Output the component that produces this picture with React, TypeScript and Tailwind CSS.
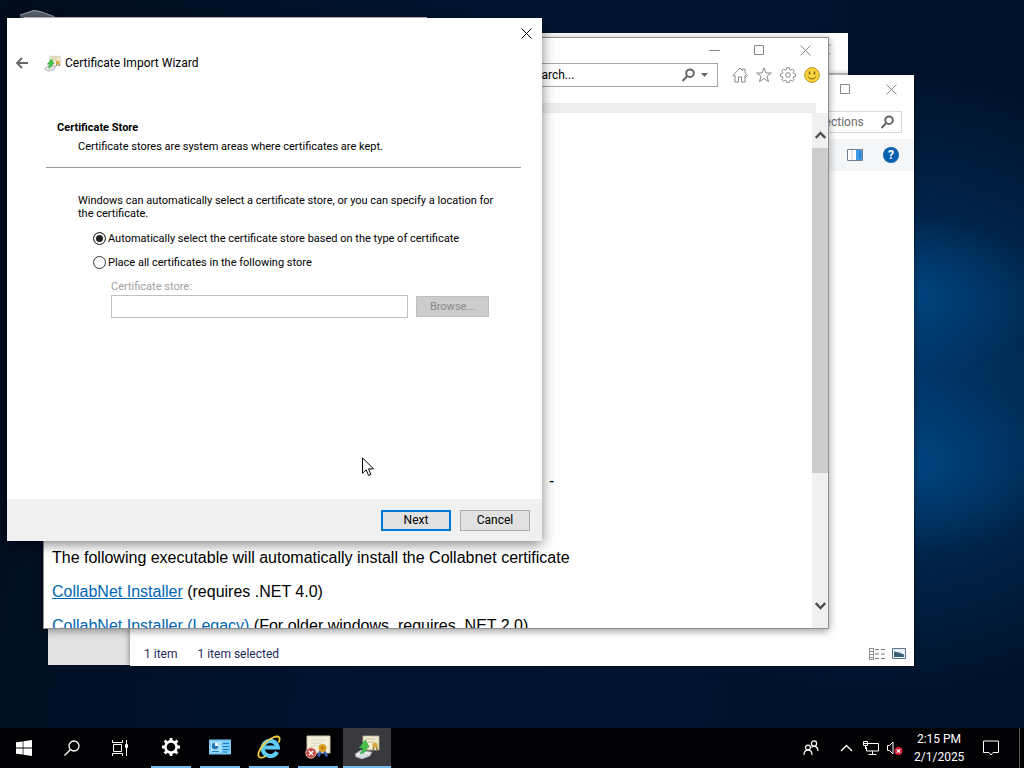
import { useState, type ReactNode } from 'react';

function CloseIcon() {
  return (
    <svg viewBox="0 0 11 11" className="size-[11px]" fill="none" stroke="currentColor">
      <path d="M.5 .5l10 10M10.5 .5l-10 10" />
    </svg>
  );
}

function MaximizeIcon() {
  return (
    <svg viewBox="0 0 11 11" className="size-[11px]" fill="none" stroke="currentColor">
      <path d="M.5 .5h9v9h-9z" />
    </svg>
  );
}

function MinimizeIcon() {
  return (
    <svg viewBox="0 0 11 11" className="size-[11px]" fill="none" stroke="currentColor">
      <path d="M0 5.5h11" />
    </svg>
  );
}

function MagnifierIcon() {
  return (
    <svg viewBox="0 0 14 14" className="size-[14px]" fill="none" stroke="#666" strokeWidth="2">
      <circle cx="9" cy="5.2" r="3.8" />
      <path d="M6.3 8L1.5 13" />
    </svg>
  );
}

function WindowControls() {
  return (
    <div className="flex h-full text-[#888]">
      <button type="button" aria-label="Minimize" className="grid w-[45px] place-items-center">
        <MinimizeIcon />
      </button>
      <button type="button" aria-label="Maximize" className="grid w-[45px] place-items-center">
        <MaximizeIcon />
      </button>
      <button type="button" aria-label="Close" className="grid w-[46px] place-items-center">
        <CloseIcon />
      </button>
    </div>
  );
}

function WizardIcon({ className }: { className: string }) {
  return (
    <svg viewBox="0 0 26 26" className={className}>
      <path d="M9 2h16v14H9z" fill="#f1ecd0" stroke="#b9b394" strokeWidth=".8" />
      <path d="M11.5 5h10M14 8h6" stroke="#c5bd99" />
      <path d="M19.8 12l-.6 4.500M22.500 12l.8 4.500" stroke="#8a7a3a" strokeWidth="1.600" />
      <circle cx="21" cy="11" r="2.600" fill="#d9a63a" />
      <path d="M1 20l6-4 11 2-2 4-8 3-6-2z" fill="#d7dade" stroke="#9399a0" strokeWidth=".7" />
      <path d="M3 21l7-2.500 5 1" fill="none" stroke="#fff" />
      <path d="M6 19.500c2-1.500 2.500-3 2.300-5.500H5l6.500-8 3.500 7-2 .3c.3 3.200-2.500 6.200-7 6.200z" fill="#46c24a" stroke="#1f8d2c" strokeWidth=".6" />
    </svg>
  );
}

function CertificateErrorIcon() {
  return (
    <svg viewBox="0 0 26 26" className="size-[26px]">
      <path d="M2 2h23v17H2z" fill="#f3efdc" stroke="#c9c2a2" />
      <path d="M6 6h14M6 9h12M6 12h7" stroke="#ddd8c0" />
      <path d="M15.500 17l-2 5.500M19 17l3 5.500" stroke="#3d62b4" strokeWidth="2.600" />
      <circle cx="17.500" cy="14" r="4" fill="#dda32b" />
      <circle cx="17.500" cy="14" r="1.800" fill="#b97a15" />
      <circle cx="6" cy="19" r="5.200" fill="#c8403a" stroke="#e6b4ae" />
      <path d="M3.700 16.700l4.600 4.600M8.300 16.700l-4.600 4.600" stroke="#fff" strokeWidth="1.600" />
    </svg>
  );
}

function ExplorerE() {
  return (
    <svg viewBox="0 0 24 24" className="size-6" fill="none">
      <path d="M20 17a7.600 7.600 0 1 1 .8-4.500H8" stroke="#5fccf5" strokeWidth="4.200" />
      <path
        d="M3 22.500C-.5 21 2 14 7.500 8.500S20 .2 22 2.200c1.200 1.200.6 3.300-.4 5.300"
        stroke="#f2cf3f"
        strokeWidth="1.800"
      />
      <path d="M3 22.500c2 .7 4-.3 6-1.700" stroke="#f2cf3f" strokeWidth="1.500" />
    </svg>
  );
}

function PanelIcon() {
  return (
    <svg viewBox="0 0 22 16" className="h-4 w-[22px]">
      <path d="M0 .5h22v15H0z" fill="#76c9f5" />
      <path d="M1.500 2.500h11v11h-11z" fill="#a7e0fb" />
      <circle cx="6" cy="7" r="3.200" fill="#2277b5" />
      <path d="M6 7V3.500A3.500 3.500 0 0 1 9.500 7z" fill="#f5fbff" />
      <path d="M3 12.500h7M14 4.500h6M14 7.500h6M14 10.500h6M14 13h4" stroke="#1c7cc4" />
    </svg>
  );
}

function GearIcon() {
  return (
    <svg viewBox="0 0 20 20" className="size-5" fill="none" stroke="#fff">
      <circle cx="10" cy="10" r="5.600" strokeWidth="2.600" />
      <path
        d="M10 1v3M10 16v3M1 10h3M16 10h3M3.600 3.600l2.200 2.200M14.200 14.200l2.200 2.200M3.600 16.400l2.200-2.200M14.200 5.800l2.200-2.200"
        strokeWidth="2.800"
      />
    </svg>
  );
}

function BackgroundWindows() {
  return (
    <>
      <svg viewBox="0 0 40 14" className="absolute left-[18px] top-[10px] h-[14px] w-10">
        <path d="M2 5L16 0l6 1 16 6v7H3z" fill="#59636e" />
        <path d="M2 5L16 .5l6 1 14 5" fill="none" stroke="#9ba3ab" />
      </svg>
      <div className="absolute left-6 top-[17px] h-[480px] w-[403px] border-t border-[#cfc3cf] bg-white" />
      <section className="absolute left-12 top-[33px] flex h-[632px] w-[800px] flex-col bg-white">
        <header className="flex h-8 justify-end">
          <WindowControls />
        </header>
        <div className="mt-2 flex-1 border-t border-[#ccc] bg-[#e3e3e3]" />
      </section>
    </>
  );
}

function ConnectionsWindow() {
  return (
    <section className="absolute left-[130px] top-[75px] flex h-[591px] w-[784px] flex-col bg-white text-xs shadow-[0_0_6px_rgba(0,0,0,0.5)]">
      <header className="flex h-7 justify-end">
        <WindowControls />
      </header>
      <div className="flex justify-end pb-1.5 pr-3 pt-2">
        <label className="flex h-[22px] w-[206px] items-center border border-[#d9d9d9] pr-[7px]">
          <input
            type="text"
            aria-label="Search Network Connections"
            placeholder="Search Network Connections"
            className="min-w-0 flex-1 pl-3 outline-none placeholder:text-[#6d6d6d]"
          />
          <MagnifierIcon />
        </label>
      </div>
      <div className="flex h-8 items-center justify-end gap-5 bg-[#f5f6f7] pr-[15px]">
        <button type="button" aria-label="Preview pane">
          <svg viewBox="0 0 16 12" className="h-3 w-4">
            <path d="M.5 .5h15v11H.5z" fill="#fff" stroke="#6f7f8f" />
            <path d="M9 1h6v10H9z" fill="#3d9be9" />
            <path d="M5 1v10" stroke="#c8cdd2" />
            <path d="M13 2v8" stroke="#1c6fc0" />
          </svg>
        </button>
        <button
          type="button"
          aria-label="Help"
          className="grid size-4 place-items-center rounded-full bg-[#0a63b1] font-bold text-white"
        >
          ?
        </button>
      </div>
      <div className="flex-1" />
      <footer className="flex h-6 items-center gap-5 px-[14px] text-[#1e2a5a]">
        <span>1 item</span>
        <span>1 item selected</span>
        <svg viewBox="0 0 40 14" className="-mr-2 ml-auto h-[14px] w-10">
          <path d="M1.500 1v12M5.500 1v12M1.500 1.500h4M1.500 4.500h4M1.500 7.500h4M1.500 10.500h4M1.500 12.500h4" fill="none" stroke="#777" strokeWidth=".8" />
          <path d="M7 2.500h4M7 7h4M7 11.500h4M13 2.500h4M13 7h4M13 11.500h4" stroke="#777" />
          <path d="M24.500 1.500h13v10h-13z" fill="#e9f2fa" stroke="#5c7489" />
          <path d="M26 4.500l5 1 5 2v2.500H26z" fill="#3e5f78" />
        </svg>
      </footer>
    </section>
  );
}

function BrowserWindow() {
  return (
    <section className="absolute left-[43px] top-[37px] flex h-[592px] w-[786px] flex-col border border-[#8f8f8f] bg-white shadow-[0_2px_8px_rgba(0,0,0,0.4)]">
      <header className="flex h-[25px] justify-end">
        <WindowControls />
      </header>
      <div className="flex items-center justify-end gap-2 pr-2 text-[#8a8a8a]">
        <label className="mr-1.5 flex h-6 w-[212px] items-center gap-1.5 border border-[#a5a5a5] pr-[9px] text-xs text-black">
          <input
            type="text"
            aria-label="Search"
            defaultValue="Search..."
            className="min-w-0 flex-1 pl-[21px] outline-none"
          />
          <MagnifierIcon />
          <svg viewBox="0 0 7 4" className="h-1 w-[7px]">
            <path d="M0 0h7L3.500 4z" fill="#666" />
          </svg>
        </label>
        <button type="button" aria-label="Home">
          <svg viewBox="0 0 16 16" className="size-4" fill="none" stroke="currentColor">
            <path d="M.8 8.500L8 1l2.500 2.600V2h2.500v4l2.300 2.500-1 1L13 8.300V15H9.500v-5h-3v5H3V8.300L1.800 9.500z" />
          </svg>
        </button>
        <button type="button" aria-label="Favorites">
          <svg viewBox="0 0 16 16" className="size-4" fill="none" stroke="currentColor">
            <path d="M8 .8l1.900 5.200h5.400l-4.300 3.300 1.600 5.500L8 11.500l-4.600 3.300L5 9.300.7 6h5.400z" />
          </svg>
        </button>
        <button type="button" aria-label="Tools">
          <svg viewBox="0 0 16 16" className="size-4" fill="none" stroke="currentColor">
            <circle cx="8" cy="8" r="2.400" />
            <path d="M6.800.7h2.400l.4 2 1.200.5 1.700-1.100 1.700 1.700-1.100 1.700.5 1.100 2 .4v2.400l-2 .4-.5 1.100 1.100 1.700-1.700 1.700-1.700-1.100-1.200.5-.4 2H6.800l-.4-2-1.200-.5-1.700 1.100-1.700-1.700 1.100-1.700-.5-1.100-2-.4V7l2-.4.5-1.100-1.100-1.700 1.700-1.700 1.700 1.100 1.200-.5z" />
          </svg>
        </button>
        <button type="button" aria-label="Feedback">
          <svg viewBox="0 0 16 16" className="size-4">
            <circle cx="8" cy="8" r="7.400" fill="#f8d33c" stroke="#bd981d" />
            <path d="M5.500 4.500v3M10.500 4.500v3" stroke="#77560f" strokeWidth="1.400" />
            <path d="M4 9.500c1.500 3.200 6.500 3.200 8 0" fill="none" stroke="#77560f" />
          </svg>
        </button>
      </div>
      <div className="mr-3 mt-4 h-[10px] bg-[#eee]" />
      <div className="flex min-h-0 flex-1">
        <article className="flex min-w-0 flex-1 flex-col gap-4 overflow-hidden px-2 pt-[359px] font-['Liberation_Sans',Arial,sans-serif] text-base leading-[18px] text-black">
          <p className="pl-[497px]">-</p>
          <p className="mt-[43px]">
            The following executable will automatically install the Collabnet certificate
          </p>
          <p>
            <a href="#installer" className="text-[#0066b3] underline">CollabNet Installer</a> (requires .NET 4.0)
          </p>
          <p className="whitespace-nowrap">
            <a href="#legacy" className="text-[#0066b3] underline">CollabNet Installer (Legacy)</a> (For older windows, requires .NET 2.0)
          </p>
        </article>
        <div className="flex w-4 flex-col bg-[#f0f0f0] text-[#505050]">
          <button type="button" aria-label="Scroll up" className="grid h-[35px] place-items-center pt-2">
            <svg viewBox="0 0 11 8" className="h-2 w-[11px]" fill="none" stroke="currentColor" strokeWidth="2.400">
              <path d="M.8 7l4.700-5 4.700 5" />
            </svg>
          </button>
          <div className="h-[325px] bg-[#cdcdcd]" />
          <button type="button" aria-label="Scroll down" className="mb-[14px] mt-auto grid h-4 place-items-center">
            <svg viewBox="0 0 11 8" className="h-2 w-[11px]" fill="none" stroke="currentColor" strokeWidth="2.400">
              <path d="M.8 1l4.700 5 4.700-5" />
            </svg>
          </button>
        </div>
      </div>
    </section>
  );
}

function ImportWizard() {
  const [mode, setMode] = useState<'auto' | 'manual'>('auto');
  const radioClass =
    'size-[13px] appearance-none rounded-full border border-[#333] bg-white checked:bg-[#222] checked:shadow-[inset_0_0_0_2px_white]';

  return (
    <section className="absolute left-[7px] top-[18px] flex h-[523px] w-[535px] flex-col bg-white text-[11px] leading-[13px] text-black shadow-[0_3px_12px_rgba(0,0,0,0.5)]">
      <header className="text-xs">
        <div className="flex h-[30px] justify-end">
          <button type="button" aria-label="Close" className="grid w-8 place-items-center">
            <CloseIcon />
          </button>
        </div>
        <div className="flex h-[30px] items-center px-2">
          <button type="button" aria-label="Back" className="text-[#666]">
            <svg viewBox="0 0 14 12" className="h-3 w-[14px]" fill="none" stroke="currentColor" strokeWidth="1.800">
              <path d="M13 6H2M7 1L2 6l5 5" />
            </svg>
          </button>
          <WizardIcon className="ml-[15px] mr-1 size-[17px]" />
          <h1>Certificate Import Wizard</h1>
        </div>
      </header>
      <div className="flex-1 pt-[43px]">
        <h2 className="pl-[50px] font-bold">Certificate Store</h2>
        <p className="pl-[71px] pt-1.5">Certificate stores are system areas where certificates are kept.</p>
        <hr className="mb-[26px] ml-[39px] mr-[21px] mt-[14px] border-[#999]" />
        <p className="w-[490px] pl-[71px]">
          Windows can automatically select a certificate store, or you can specify a location for
          the certificate.
        </p>
        <div className="flex flex-col gap-[11px] pl-[86px] pt-3">
          <label className="flex items-center gap-0.5">
            <input
              type="radio"
              name="store"
              checked={mode === 'auto'}
              onChange={() => setMode('auto')}
              className={radioClass}
            />
            Automatically select the certificate store based on the type of certificate
          </label>
          <label className="flex items-center gap-0.5">
            <input
              type="radio"
              name="store"
              checked={mode === 'manual'}
              onChange={() => setMode('manual')}
              className={radioClass}
            />
            Place all certificates in the following store
          </label>
        </div>
        <div className="pl-[104px] pt-[11px]">
          <label htmlFor="store-name" className="block text-[#a0a0a0]">
            Certificate store:
          </label>
          <div className="flex items-center gap-2 pt-0.5">
            <input
              id="store-name"
              type="text"
              disabled={mode === 'auto'}
              className="h-[23px] w-[297px] border border-[#c0c0c0] px-1"
            />
            <button
              type="button"
              disabled={mode === 'auto'}
              className="h-[21px] w-[73px] border border-[#bfbfbf] bg-[#ccc] text-[#8a8a8a]"
            >
              Browse...
            </button>
          </div>
        </div>
      </div>
      <footer className="flex h-[42px] items-center justify-end gap-[9px] bg-[#f0f0f0] pr-3 text-xs">
        <button type="button" className="h-[21px] w-[70px] border-2 border-[#0078d7] bg-[#e1e1e1] leading-4">
          Next
        </button>
        <button type="button" className="h-[21px] w-[70px] border border-[#adadad] bg-[#e1e1e1] leading-4">
          Cancel
        </button>
      </footer>
    </section>
  );
}

function TaskButton({ label, active, children }: { label: string; active?: boolean; children: ReactNode }) {
  return (
    <button
      type="button"
      aria-label={label}
      className={active ? 'flex w-12 flex-col bg-[#3a3a3e]' : 'flex w-12 flex-col px-1'}
    >
      <span className="grid w-full flex-1 place-items-center">{children}</span>
      <span className="h-0.5 w-full bg-[#76b9ed]" />
    </button>
  );
}

function Taskbar() {
  return (
    <footer className="flex h-10 bg-[#020205] text-xs text-white">
      <button type="button" aria-label="Start" className="grid w-12 place-items-center">
        <svg viewBox="0 0 16 16" className="size-4" fill="#fff">
          <path d="M0 2.300l6.700-.9v6.200H0zM7.400 1.300L16 0v7.600H7.400zM0 8.400h6.700v6.200L0 13.700zM7.400 8.400H16V16l-8.600-1.300z" />
        </svg>
      </button>
      <button type="button" aria-label="Search" className="grid w-12 place-items-center">
        <svg viewBox="0 0 16 16" className="size-4" fill="none" stroke="#fff" strokeWidth="1.300">
          <circle cx="10" cy="6" r="5" />
          <path d="M6.300 9.700L.5 15.500" />
        </svg>
      </button>
      <button type="button" aria-label="Task View" className="mr-[3px] grid w-12 place-items-center">
        <svg viewBox="0 0 16 16" className="size-4" fill="none" stroke="#fff">
          <path d="M.5 0v2.500h10V0M1.500 4.500h8v7h-8zM.5 16v-2.500h10V16M14.500 0v16" />
          <path d="M13.500 4.500h2v3h-2z" fill="#fff" />
        </svg>
      </button>
      <nav className="flex gap-px">
        <TaskButton label="Settings">
          <GearIcon />
        </TaskButton>
        <TaskButton label="Control Panel">
          <PanelIcon />
        </TaskButton>
        <TaskButton label="Internet Explorer">
          <ExplorerE />
        </TaskButton>
        <TaskButton label="Certificates">
          <CertificateErrorIcon />
        </TaskButton>
        <TaskButton label="Certificate Import Wizard" active>
          <WizardIcon className="size-[26px]" />
        </TaskButton>
      </nav>
      <div className="ml-auto flex items-center">
        <button type="button" aria-label="People" className="mr-[21px]">
          <svg viewBox="0 0 16 16" className="size-4" fill="none" stroke="#fff" strokeWidth="1.200">
            <circle cx="5" cy="7.500" r="2.400" />
            <path d="M1 15c0-6.500 8-6.500 8 0" />
            <circle cx="11" cy="3.500" r="2.600" />
            <path d="M8.500 7.500c2.500-2.500 6.500-1 6.500 3.500" />
          </svg>
        </button>
        <button type="button" aria-label="Show hidden icons" className="mr-2.5">
          <svg viewBox="0 0 13 8" className="h-2 w-[13px]" fill="none" stroke="#fff" strokeWidth="1.300">
            <path d="M1 7l5.500-5.500L12 7" />
          </svg>
        </button>
        <button type="button" aria-label="Network" className="mr-2">
          <svg viewBox="0 0 16 14" className="h-[14px] w-4" fill="none" stroke="#fff">
            <path d="M5 2.500h10.500v7.500H3.500V6M9.500 10v3M5.500 13.500h8M.5 .5h4v4h-4zM.5 2.500h4M2.500 4.500V8" />
          </svg>
        </button>
        <button type="button" aria-label="Volume muted" className="mr-[11px]">
          <svg viewBox="0 0 16 16" className="size-4" fill="none">
            <path d="M.5 5.500h2L6 2v12l-3.500-3.500h-2z" stroke="#fff" />
            <circle cx="11.500" cy="11" r="4" fill="#d8203a" />
            <path d="M9.800 9.300l3.400 3.400M13.200 9.300l-3.400 3.400" stroke="#fff" strokeWidth="1.200" />
          </svg>
        </button>
        <time className="w-[50px] text-center leading-[18px]">
          2:15 PM
          <br />
          2/1/2025
        </time>
        <button type="button" aria-label="Notifications" className="ml-[19px] mr-5">
          <svg viewBox="0 0 16 16" className="size-4" fill="none" stroke="#fff">
            <path d="M.5 1h15v11.500H10L8 15l-2-2.500H.5z" />
          </svg>
        </button>
        <div className="mr-1 h-10 w-px bg-[#555]" />
      </div>
    </footer>
  );
}

export default function App() {
  return (
    <div className="flex min-h-screen flex-col overflow-hidden bg-[#00152e] font-['Roboto','Open_Sans',sans-serif]">
      <main className="relative flex-1 bg-[radial-gradient(ellipse_140px_80px_at_905px_295px,#00447f,transparent),radial-gradient(ellipse_160px_90px_at_905px_465px,#00447f,transparent),radial-gradient(ellipse_360px_310px_at_890px_385px,#003a70,transparent),linear-gradient(100deg,#000d1c,#001533_45%,#00122a)]">
        <BackgroundWindows />
        <ConnectionsWindow />
        <BrowserWindow />
        <ImportWizard />
        <svg viewBox="0 0 12 20" className="absolute left-[362px] top-[457px] h-5 w-3">
          <path d="M.5 .8v15.500l3.700-3.500 2.400 5.700 2.300-1-2.400-5.600h5z" fill="#fff" stroke="#000" />
        </svg>
      </main>
      <Taskbar />
    </div>
  );
}
